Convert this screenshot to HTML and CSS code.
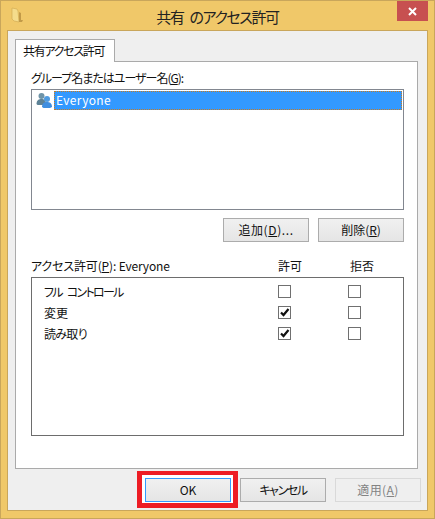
FILE: index.html
```html
<!DOCTYPE html>
<html lang="ja">
	<head>
		<meta charset="utf-8">
		<title>共有 のアクセス許可</title>
		<link rel="stylesheet" href="styles.css">
	</head>
	<body>
		<div class="window">
			<div class="titlebar">
				<svg class="folder-icon" width="14" height="16" viewBox="0 0 14 16">
					<path d="M1 1 L6 2 L7 4 L8 15 L3 14 L1 12 Z" fill="#f5dc8c" stroke="#d2ae55" stroke-width="0.7"/>
					<path d="M8 5 L10 6 L10 13 L12 13 L11 15 L8 15 Z" fill="#c29a48"/>
				</svg>
				<span class="title-text">共有 のアクセス許可</span>
				<div class="close-btn">
					<svg width="9" height="9" viewBox="0 0 9 9">
						<path d="M1 1 L8 8 M8 1 L1 8" stroke="#fff" stroke-width="2"/>
					</svg>
				</div>
			</div>

			<div class="client">
				<div class="tab">共有アクセス許可</div>

				<div class="panel">
					<div class="group-label">グループ名またはユーザー名(<u>G</u>):</div>
					<div class="listbox group-list">
						<div class="group-row">
							<svg class="users-icon" width="18" height="17" viewBox="0 0 18 17">
								<circle cx="5.5" cy="4" r="3" fill="#6f94a8"/>
								<path d="M0.5 12 C0.5 8 3 7 5.5 7 C8 7 10 8 10 12 L8 13 L1.5 13 Z" fill="#5d8296"/>
								<circle cx="11" cy="7" r="3" fill="#4f9be0"/>
								<path d="M6 15 C6 11 8.500 10 11 10 C13.500 10 16 11 16 15 L14 16 L7.500 16 Z" fill="#3f8ee0"/>
							</svg>
							<span class="selected-item">Everyone</span>
						</div>
					</div>

					<div class="group-buttons">
						<div class="btn btn-wide-text">追加(<u>D</u>)...</div>
						<div class="btn">削除(<u>R</u>)</div>
					</div>

					<div class="perm-header">
						<span class="perm-title">アクセス許可(<u>P</u>): Everyone</span>
						<span>許可</span>
						<span>拒否</span>
					</div>
					<div class="listbox perm-list">
						<div class="perm-row">
							<span class="text-full">フル コントロール</span>
							<span class="check"></span>
							<span class="check"></span>
						</div>
						<div class="perm-row">
							<span>変更</span>
							<span class="check">
								<svg width="11" height="11" viewBox="0 0 11 11"><path d="M2 5.500 L4.500 8 L9.500 2" fill="none" stroke="#111" stroke-width="2.200"/></svg>
							</span>
							<span class="check"></span>
						</div>
						<div class="perm-row">
							<span class="text-read">読み取り</span>
							<span class="check">
								<svg width="11" height="11" viewBox="0 0 11 11"><path d="M2 5.500 L4.500 8 L9.500 2" fill="none" stroke="#111" stroke-width="2.200"/></svg>
							</span>
							<span class="check"></span>
						</div>
					</div>
				</div>

				<div class="footer">
					<div class="btn btn-ok">OK<div class="ok-mark"></div></div>
					<div class="btn btn-cancel">キャンセル</div>
					<div class="btn btn-disabled">適用(<u>A</u>)</div>
				</div>
			</div>
		</div>
	</body>
</html>
```

FILE: styles.css
```css
html, body {
	margin: 0;
	padding: 0;
}

body {
	font-family: "Noto Sans CJK JP", "Noto Sans", sans-serif;
	font-size: 12px;
	font-feature-settings: "palt";
	color: #111;
}

.window {
	box-sizing: border-box;
	width: 435px;
	height: 519px;
	display: flex;
	flex-direction: column;
	border: 1px solid #c9a65b;
	background-color: #f0c869;
}

.titlebar {
	position: relative;
	flex: none;
	height: 29px;
	display: flex;
	justify-content: center;
	align-items: center;
}

.folder-icon {
	position: absolute;
	left: 10px;
	top: 6px;
}

.title-text {
	font-size: 15px;
	letter-spacing: -1.4px;
	word-spacing: 4px;
	color: #222;
	padding-top: 2px;
}

.close-btn {
	position: absolute;
	top: 0;
	right: 6px;
	width: 31px;
	height: 20px;
	display: flex;
	justify-content: center;
	align-items: center;
	background-color: #c75050;
}

.client {
	flex: none;
	box-sizing: border-box;
	width: 421px;
	height: 481px;
	margin-left: 6px;
	padding: 8px 0 0 7px;
	border: 1px solid #c9a65b;
	background-color: #efefef;
}

.tab {
	box-sizing: border-box;
	position: relative;
	z-index: 1;
	width: 100px;
	height: 23px;
	padding-left: 7px;
	line-height: 21px;
	letter-spacing: -1.3px;
	white-space: nowrap;
	border: 1px solid #aaa;
	border-bottom: none;
	background-color: #fff;
}

.panel {
	box-sizing: border-box;
	width: 403px;
	height: 408px;
	margin-top: -1px;
	padding: 0 13px 0 15px;
	border: 1px solid #aaa;
	background-color: #fff;
}

.group-label {
	height: 27px;
	line-height: 31px;
	letter-spacing: -1px;
	white-space: nowrap;
}

.listbox {
	box-sizing: border-box;
	border: 1px solid #828790;
}

.group-list {
	height: 121px;
	padding: 1px;
}

.group-row {
	display: flex;
	align-items: center;
	height: 19px;
	padding-left: 3px;
}

.users-icon {
	flex: none;
}

.selected-item {
	flex: 1;
	height: 19px;
	line-height: 18px;
	padding-left: 2px;
	box-sizing: border-box;
	letter-spacing: 0.35px;
	background-color: #3399ff;
	outline: 1px dotted #c87a20;
	outline-offset: -1px;
	color: #fff;
}

.group-buttons {
	display: flex;
	justify-content: flex-end;
	gap: 9px;
	margin-top: 8px;
}

.btn {
	box-sizing: border-box;
	position: relative;
	width: 86px;
	height: 24px;
	line-height: 22px;
	text-align: center;
	border: 1px solid #acacac;
	background: linear-gradient(#f0f0f0, #e5e5e5);
}

.btn-wide-text {
	letter-spacing: 0.6px;
}

.perm-header {
	display: grid;
	grid-template-columns: 247px 72px auto;
	height: 35px;
	line-height: 48px;
}

.perm-title {
	letter-spacing: -0.15px;
}

.perm-list {
	height: 159px;
	padding: 3px 0 0 12px;
	border-color: #6d6d6d;
}

.perm-row {
	display: grid;
	grid-template-columns: 234px 70px 13px;
	align-items: center;
	height: 21px;
}

.text-full {
	letter-spacing: -1.7px;
	word-spacing: 4px;
}

.text-read {
	letter-spacing: -0.7px;
}

.check {
	box-sizing: border-box;
	width: 13px;
	height: 13px;
	display: flex;
	justify-content: center;
	align-items: center;
	border: 1px solid #707070;
	background-color: #fff;
}

.footer {
	display: flex;
	gap: 9px;
	margin-top: 9px;
	padding-left: 130px;
}

.btn-ok {
	border-color: #3399ff;
	box-shadow: 0 0 0 3px #fff;
}

.ok-mark {
	position: absolute;
	left: -9px;
	top: -8px;
	width: 91px;
	height: 28px;
	border-style: solid;
	border-color: #ed1c24;
	border-width: 4px 5px 5px;
}

.btn-cancel {
	letter-spacing: -1.4px;
}

.btn-disabled {
	letter-spacing: 0.4px;
	border-color: #d9d9d9;
	background: #efefef;
	color: #838383;
}
```
